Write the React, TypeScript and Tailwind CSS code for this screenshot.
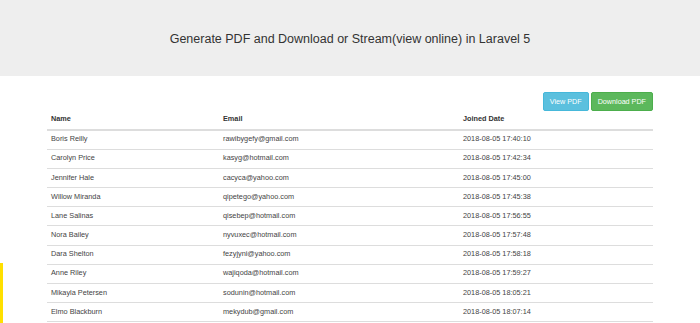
import React from "react";

const rows = [
  ["Boris Reilly", "rawibygefy@gmail.com", "2018-08-05 17:40:10"],
  ["Carolyn Price", "kasyg@hotmail.com", "2018-08-05 17:42:34"],
  ["Jennifer Hale", "cacyca@yahoo.com", "2018-08-05 17:45:00"],
  ["Willow Miranda", "qipetego@yahoo.com", "2018-08-05 17:45:38"],
  ["Lane Salinas", "qisebep@hotmail.com", "2018-08-05 17:56:55"],
  ["Nora Bailey", "nyvuxec@hotmail.com", "2018-08-05 17:57:48"],
  ["Dara Shelton", "fezyjyni@yahoo.com", "2018-08-05 17:58:18"],
  ["Anne Riley", "wajiqoda@hotmail.com", "2018-08-05 17:59:27"],
  ["Mikayla Petersen", "sodunin@hotmail.com", "2018-08-05 18:05:21"],
  ["Elmo Blackburn", "mekydub@gmail.com", "2018-08-05 18:07:14"],
];

export default function App() {
  return (
    <div
      className="relative w-[700px] h-[323px] overflow-hidden bg-white text-[#333]"
      style={{ fontFamily: '"Liberation Sans", Arial, sans-serif' }}
    >
      <div className="h-[76px] bg-[#eeeeee] flex items-center justify-center pt-[3px]">
        <h3 className="text-[12.5px] leading-none text-[#333] font-normal">
          Generate PDF and Download or Stream(view online) in Laravel 5
        </h3>
      </div>

      <div className="w-[606px] mx-auto pt-[16px]">
        <div className="flex justify-end gap-[2px]">
          <button className="h-[18.5px] px-[6px] rounded-[2px] bg-[#5bc0de] border border-[#46b8da] text-white text-[7.2px] leading-none">
            View PDF
          </button>
          <button className="h-[18.5px] px-[6px] rounded-[2px] bg-[#5cb85c] border border-[#4cae4c] text-white text-[7.2px] leading-none">
            Download PDF
          </button>
        </div>

        <div className="text-[7.3px]">
          <div className="grid grid-cols-[172px_240px_194px] h-[20px] items-center border-b-2 border-[#dddddd] font-bold text-[#333]">
            <div className="pl-[4px]">Name</div>
            <div className="pl-[4px]">Email</div>
            <div className="pl-[4px]">Joined Date</div>
          </div>
          {rows.map((r) => (
            <div
              key={r[0]}
              className="grid grid-cols-[172px_240px_194px] h-[19.2px] items-center border-b border-[#dddddd] text-[#444]"
            >
              <div className="pl-[4px]">{r[0]}</div>
              <div className="pl-[4px]">{r[1]}</div>
              <div className="pl-[4px]">{r[2]}</div>
            </div>
          ))}
        </div>
      </div>

      <div className="absolute left-0 top-[263px] w-[3px] h-[60px] bg-[#ffe000]" />
    </div>
  );
}
